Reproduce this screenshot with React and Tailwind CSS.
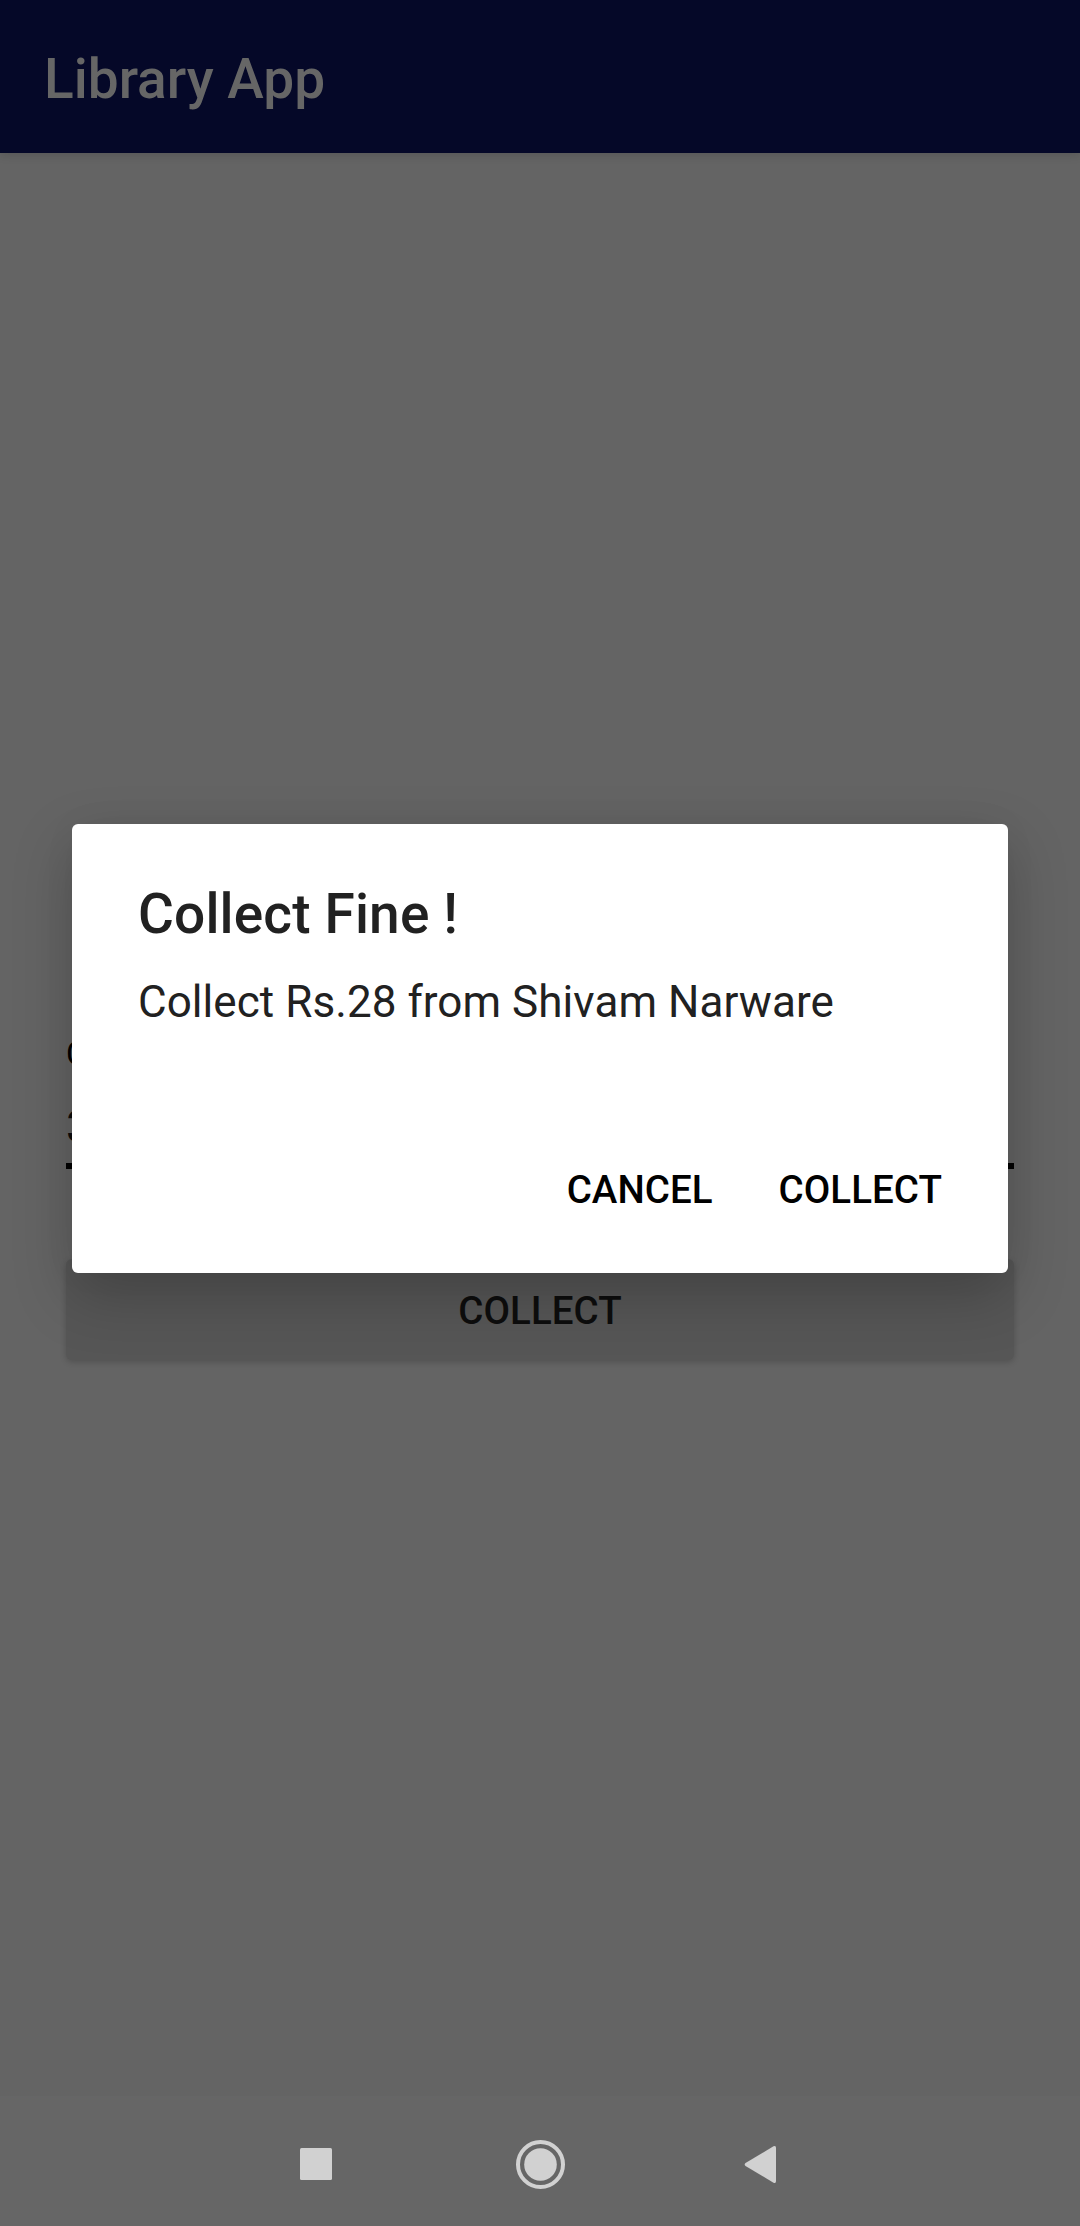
function NavBar() {
  return (
    <nav className="grid h-[130px] shrink-0 grid-cols-1 bg-[#666666]">
      <svg viewBox="0 0 1080 130" className="h-[130px] w-full" fill="#d1d1d1">
        <rect x="300" y="52" width="32" height="32" rx="1.5" />
        <circle cx="540.5" cy="68.5" r="22.5" fill="none" stroke="#d1d1d1" strokeWidth="4" />
        <circle cx="540.5" cy="68.5" r="16.3" />
        <path d="M745.5 67 L773.5 50.3 Q776 49 776 52 V85 Q776 88 773.5 86.7 L745.5 70 Q743.8 68.5 745.5 67Z" />
      </svg>
    </nav>
  );
}

function Dialog() {
  return (
    <div className="absolute inset-0 z-10">
      <section
        role="dialog"
        className="mx-[72px] mt-[824px] flex h-[449px] flex-col rounded-[6px] bg-white px-[66px] pt-[58px] text-[#212121] shadow-[0_22px_60px_rgba(0,0,0,0.22),0_0_40px_rgba(0,0,0,0.03)]"
      >
        <h2 className="h-[65px] whitespace-nowrap text-[55px] font-medium leading-[65px] tracking-[0.15px]">Collect Fine !</h2>
        <p className="mt-[29px] whitespace-nowrap text-[44px] leading-[52px] tracking-[0.06px]">
          Collect Rs.28 from Shivam Narware
        </p>
        <div className="mt-[139px] flex justify-end gap-[66px] text-[38.5px] font-medium leading-[46px] tracking-[0.05px] text-black">
          <button>CANCEL</button>
          <button>COLLECT</button>
        </div>
      </section>
    </div>
  );
}

export default function App() {
  return (
    <div className="relative flex h-[2226px] w-[1080px] flex-col overflow-hidden bg-[#646464] font-['Roboto',sans-serif]">
      <header className="flex h-[153px] shrink-0 items-center bg-[#050828] pl-[44px] pt-[6px] shadow-[0_1px_10px_rgba(0,0,0,0.16)]">
        <h1 className="text-[55px] font-medium leading-[65px] text-[#666666]">Library App</h1>
      </header>
      <main className="flex flex-1 flex-col px-[66px] pt-[881px]">
        <label className="h-[40px] text-[33px] leading-[40px] text-black">C</label>
        <div className="mt-[27px] h-[68px] border-b-[6px] border-black text-[44px] leading-[52px] text-[#0d0d0d]">3</div>
        <button className="mt-[90px] h-[101px] rounded-[6px] bg-[#565656] pt-[2px] text-[38.5px] font-medium leading-[46px] tracking-[0.05px] text-[#0d0d0d] shadow-[0_2px_6px_rgba(0,0,0,0.2)]">
          COLLECT
        </button>
      </main>
      <NavBar />
      <Dialog />
    </div>
  );
}
